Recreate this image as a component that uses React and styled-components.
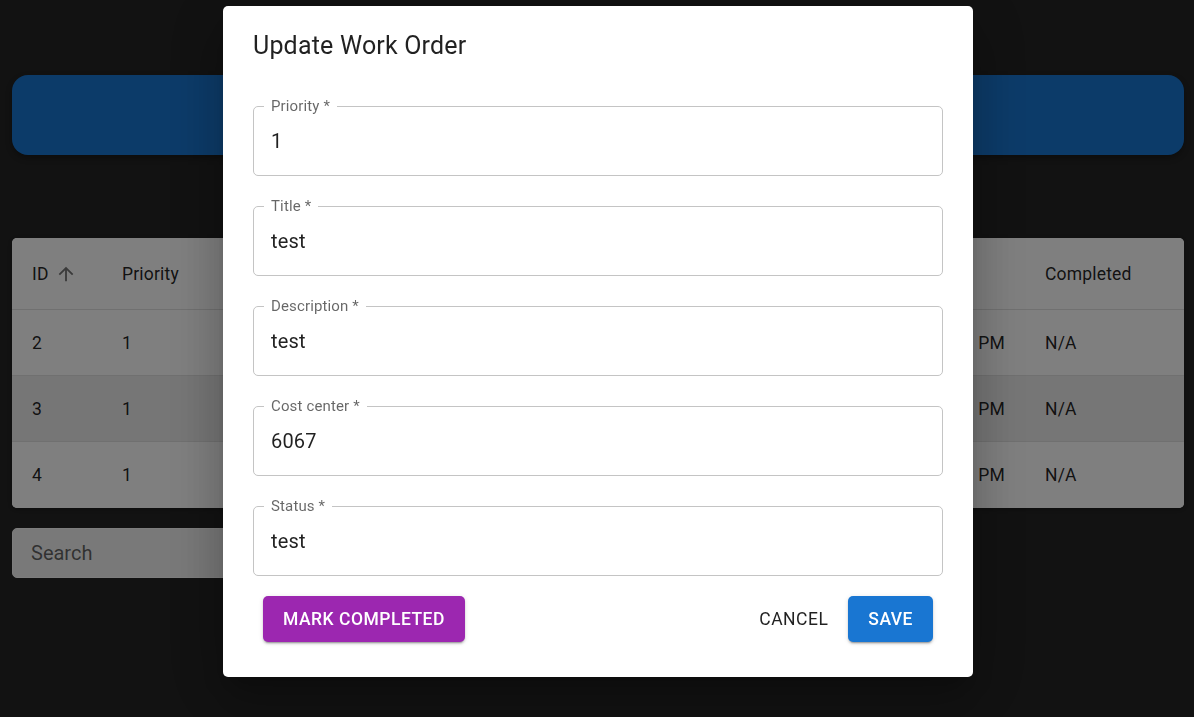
import React from "react";
import styled, { createGlobalStyle } from "styled-components";

const GlobalStyle = createGlobalStyle`
  html, body {
    margin: 0;
    padding: 0;
    background: #242424;
    font-family: Roboto, "Liberation Sans", Arial, sans-serif;
  }
  * { box-sizing: border-box; }
`;

const Page = styled.div`
  padding: 75px 10px 40px 12px;
  display: flex;
  flex-direction: column;
  min-height: 717px;
`;

const Banner = styled.header`
  height: 80px;
  border-radius: 16px;
  background: #1976d2;
  color: #fff;
  display: flex;
  align-items: center;
  justify-content: center;
  font-size: 30px;
  font-weight: 500;
  box-shadow: 0 3px 6px rgba(0, 0, 0, 0.3);
`;

const TableCard = styled.div`
  margin-top: 83px;
  background: #fff;
  border-radius: 5px;
  overflow: hidden;
  color: rgba(0, 0, 0, 0.87);
  box-shadow: 0 2px 2px rgba(0, 0, 0, 0.14), 0 1px 5px rgba(0, 0, 0, 0.12);
`;

const Row = styled.div`
  display: grid;
  grid-template-columns: 90px 130px 1fr 1fr 130px 120px 220px 159px;
  height: ${(p) => (p.$head ? "72px" : "66px")};
  border-bottom: ${(p) => (p.$last ? "none" : "1px solid #e0e0e0")};
  background: ${(p) => (p.$hover ? "#ececec" : "#fff")};
`;

const Cell = styled.div`
  display: flex;
  align-items: center;
  justify-content: ${(p) => (p.$right ? "flex-end" : "flex-start")};
  gap: 6px;
  padding: 0 20px;
  font-size: 17.5px;
  font-weight: 400;
  letter-spacing: 0.01071em;
  white-space: pre;
  overflow: hidden;
`;

const SortIcon = styled.svg`
  width: 22px;
  height: 22px;
  fill: rgba(0, 0, 0, 0.54);
`;

const SearchBox = styled.input`
  margin-top: 20px;
  width: 420px;
  height: 50px;
  border: 1px solid #fafafa;
  border-radius: 5px;
  background: #f2f2f2;
  padding: 0 18px;
  font-family: inherit;
  font-size: 20px;
  color: rgba(0, 0, 0, 0.87);
  outline: none;
  &::placeholder {
    color: rgba(0, 0, 0, 0.6);
  }
`;

const Backdrop = styled.div`
  position: fixed;
  inset: 0;
  background: rgba(0, 0, 0, 0.5);
  display: flex;
  justify-content: center;
  align-items: flex-start;
  padding: 6px 0 0 2px;
`;

const Dialog = styled.div`
  width: 750px;
  background: #fff;
  border-radius: 5px;
  display: flex;
  flex-direction: column;
  box-shadow: 0px 14px 19px -9px rgba(0, 0, 0, 0.2),
    0px 30px 48px 4px rgba(0, 0, 0, 0.14),
    0px 11px 58px 10px rgba(0, 0, 0, 0.12);
`;

const DialogTitle = styled.h2`
  margin: 0;
  padding: 20px 30px;
  font-size: 25px;
  line-height: 40px;
  font-weight: 400;
  letter-spacing: 0.0075em;
  color: rgba(0, 0, 0, 0.87);
`;

const DialogContent = styled.div`
  padding: 11px 30px 10px;
  display: flex;
  flex-direction: column;
  gap: 21px;
`;

const Field = styled.fieldset`
  margin: 0;
  min-width: 0;
  padding: 0 10px 8px;
  border: 1px solid #c4c4c4;
  border-radius: 5px;
`;

const Label = styled.legend`
  padding: 0 7px;
  font-size: 15px;
  line-height: 18px;
  letter-spacing: 0.00938em;
  color: rgba(0, 0, 0, 0.6);
`;

const Input = styled.input`
  display: block;
  width: 100%;
  height: 52px;
  border: none;
  outline: none;
  background: transparent;
  padding: 0 7px;
  font-family: inherit;
  font-size: 20px;
  letter-spacing: 0.00938em;
  color: rgba(0, 0, 0, 0.87);
`;

const Actions = styled.div`
  display: flex;
  align-items: center;
  gap: 10px;
  padding: 10px 40px 35px;
`;

const Spacer = styled.div`
  flex: 1;
`;

const Button = styled.button`
  height: 46px;
  display: inline-flex;
  align-items: center;
  justify-content: center;
  padding: 0 ${(p) => (p.$variant === "text" ? "10px" : "20px")};
  border: none;
  border-radius: 5px;
  font-family: inherit;
  font-size: 17.5px;
  font-weight: ${(p) => (p.$variant === "text" ? 400 : 500)};
  letter-spacing: 0.5px;
  text-transform: uppercase;
  cursor: pointer;
  color: ${(p) => (p.$variant === "text" ? "rgba(0,0,0,0.87)" : "#fff")};
  background: ${(p) =>
    p.$variant === "text" ? "transparent" : p.$color || "#1976d2"};
  box-shadow: ${(p) =>
    p.$variant === "text"
      ? "none"
      : "0px 3px 1px -2px rgba(0,0,0,0.2), 0px 2px 2px 0px rgba(0,0,0,0.14), 0px 1px 5px 0px rgba(0,0,0,0.12)"};
`;

const rows = [
  { id: 2, priority: 1, title: "test", description: "test", cost: "6067", status: "test", created: "1/15/2025, 2:31:08   PM", completed: "N/A" },
  { id: 3, priority: 1, title: "test", description: "test", cost: "6067", status: "test", created: "1/15/2025, 2:33:47   PM", completed: "N/A", hover: true },
  { id: 4, priority: 1, title: "test", description: "test", cost: "6067", status: "test", created: "1/15/2025, 2:35:12   PM", completed: "N/A" },
];

const fields = [
  { label: "Priority *", value: "1" },
  { label: "Title *", value: "test" },
  { label: "Description *", value: "test" },
  { label: "Cost center *", value: "6067" },
  { label: "Status *", value: "test" },
];

export default function App() {
  return (
    <>
      <GlobalStyle />
      <Page>
        <Banner>Work Orders</Banner>
        <TableCard>
          <Row $head>
            <Cell>
              ID
              <SortIcon viewBox="0 0 24 24">
                <path d="M4 12l1.41 1.41L11 7.83V20h2V7.83l5.58 5.59L20 12l-8-8-8 8z" />
              </SortIcon>
            </Cell>
            <Cell>Priority</Cell>
            <Cell>Title</Cell>
            <Cell>Description</Cell>
            <Cell>Cost center</Cell>
            <Cell>Status</Cell>
            <Cell>Created</Cell>
            <Cell>Completed</Cell>
          </Row>
          {rows.map((r, i) => (
            <Row key={r.id} $hover={r.hover} $last={i === rows.length - 1}>
              <Cell>{r.id}</Cell>
              <Cell>{r.priority}</Cell>
              <Cell>{r.title}</Cell>
              <Cell>{r.description}</Cell>
              <Cell>{r.cost}</Cell>
              <Cell>{r.status}</Cell>
              <Cell $right>{r.created}</Cell>
              <Cell>{r.completed}</Cell>
            </Row>
          ))}
        </TableCard>
        <SearchBox placeholder="Search" />
      </Page>
      <Backdrop>
        <Dialog>
          <DialogTitle>Update Work Order</DialogTitle>
          <DialogContent>
            {fields.map((f) => (
              <Field key={f.label}>
                <Label>{f.label}</Label>
                <Input defaultValue={f.value} />
              </Field>
            ))}
          </DialogContent>
          <Actions>
            <Button $color="#9c27b0">Mark Completed</Button>
            <Spacer />
            <Button $variant="text">Cancel</Button>
            <Button $color="#1976d2">Save</Button>
          </Actions>
        </Dialog>
      </Backdrop>
    </>
  );
}
